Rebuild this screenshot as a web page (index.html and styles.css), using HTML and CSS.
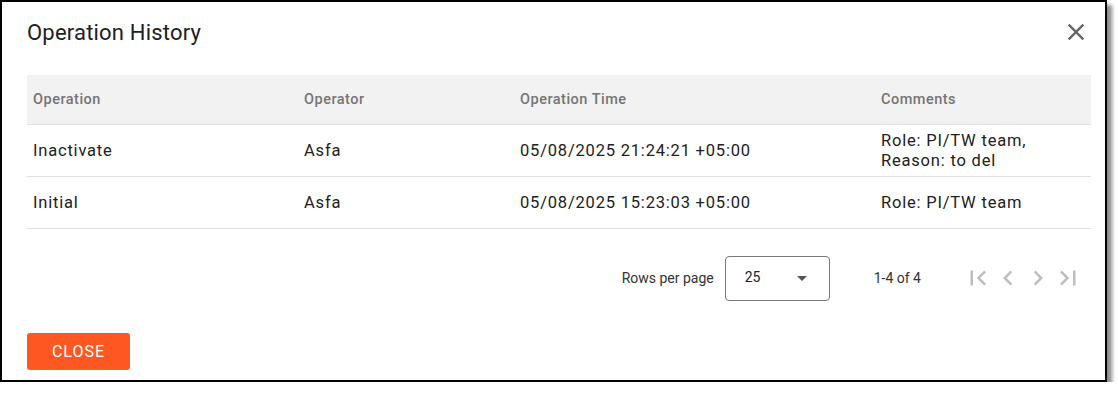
FILE: index.html
```html
<!DOCTYPE html>
<html lang="en">
<head>
<meta charset="utf-8">
<title>Operation History</title>
<link rel="stylesheet" href="styles.css">
</head>
<body>
<div class="dialog">
  <div class="dialog-head">
    <h2 class="dialog-title">Operation History</h2>
    <button class="icon-btn close-x" aria-label="Close">
      <svg viewBox="0 0 24 24" width="28" height="28"><path d="M19 6.41L17.59 5 12 10.59 6.41 5 5 6.41 10.59 12 5 17.59 6.41 19 12 13.41 17.59 19 19 17.59 13.41 12z"/></svg>
    </button>
  </div>
  <table class="grid">
    <colgroup>
      <col class="c1"><col class="c2"><col class="c3"><col class="c4">
    </colgroup>
    <thead>
      <tr><th>Operation</th><th>Operator</th><th>Operation Time</th><th>Comments</th></tr>
    </thead>
    <tbody>
      <tr><td>Inactivate</td><td>Asfa</td><td>05/08/2025 21:24:21 +05:00</td><td>Role: PI/TW team,<br>Reason: to del</td></tr>
      <tr><td>Initial</td><td>Asfa</td><td>05/08/2025 15:23:03 +05:00</td><td>Role: PI/TW team</td></tr>
    </tbody>
  </table>
  <div class="pager">
    <span class="pager-label">Rows per page</span>
    <div class="select">
      <span class="select-val">25</span>
      <span class="caret"></span>
    </div>
    <span class="pager-range">1-4 of 4</span>
    <div class="pager-nav">
      <svg viewBox="0 0 24 24" width="30" height="30"><path d="M18.41 16.59L13.82 12l4.59-4.59L17 6l-6 6 6 6zM6 6h2v12H6z"/></svg>
      <svg viewBox="0 0 24 24" width="30" height="30"><path d="M15.41 7.41L14 6l-6 6 6 6 1.41-1.41L10.83 12z"/></svg>
      <svg viewBox="0 0 24 24" width="30" height="30"><path d="M10 6L8.59 7.41 13.17 12l-4.58 4.59L10 18l6-6z"/></svg>
      <svg viewBox="0 0 24 24" width="30" height="30"><path d="M5.59 7.41L10.18 12l-4.59 4.59L7 18l6-6-6-6zM16 6h2v12h-2z"/></svg>
    </div>
  </div>
  <div class="actions">
    <button class="btn-close">CLOSE</button>
  </div>
</div>
</body>
</html>
```
FILE: styles.css
```css
html, body {
  margin: 0;
  padding: 0;
  background: #fff;
}
body {
  font-family: Roboto, "Liberation Sans", sans-serif;
  color: #212121;
}
.dialog {
  box-sizing: border-box;
  width: 1107px;
  height: 382px;
  border: 2px solid #000;
  box-shadow: 5px 5px 4px rgba(0, 0, 0, 0.45);
  background: #fff;
  padding: 0 14px 0 25px;
  display: flex;
  flex-direction: column;
}
.dialog-head {
  height: 60px;
  display: flex;
  align-items: center;
  justify-content: space-between;
}
.dialog-title {
  margin: 0;
  font-size: 22px;
  font-weight: 400;
  letter-spacing: 0.2px;
  color: #212121;
}
.icon-btn {
  border: 0;
  background: none;
  padding: 0;
  margin-right: 1px;
  display: flex;
}
.close-x svg {
  fill: #666;
}
.grid {
  margin-top: 13px;
  width: 100%;
  border-collapse: collapse;
  table-layout: fixed;
}
.c1 { width: 271px; }
.c2 { width: 216px; }
.c3 { width: 361px; }
.c4 { width: auto; }
.grid th {
  background: #f2f2f2;
  height: 49px;
  padding: 0 6px;
  text-align: left;
  font-size: 14.5px;
  letter-spacing: 0.5px;
  font-weight: 500;
  color: #757575;
  border-bottom: 1px solid #e0e0e0;
}
.grid td {
  height: 51px;
  padding: 0 6px;
  font-size: 16.5px;
  letter-spacing: 0.8px;
  line-height: 20px;
  color: #212121;
  border-bottom: 1px solid #e0e0e0;
}
.pager {
  margin-top: 21px;
  height: 56px;
  display: flex;
  align-items: center;
  justify-content: flex-end;
  padding-right: 8px;
  font-size: 14px;
  color: #333;
}
.pager-label {
  margin-right: 11px;
}
.select {
  box-sizing: border-box;
  width: 105px;
  height: 45px;
  border: 1px solid #7a7a7a;
  border-radius: 4px;
  display: flex;
  align-items: center;
  justify-content: space-between;
  padding: 0 22px 3px 19px;
}
.select-val {
  font-size: 14px;
  color: #222;
}
.caret {
  width: 0;
  height: 0;
  border-left: 5px solid transparent;
  border-right: 5px solid transparent;
  border-top: 5px solid #555;
  margin-top: 3px;
}
.pager-range {
  margin-left: 44px;
  margin-right: 42px;
}
.pager-nav {
  display: flex;
}
.pager-nav svg {
  fill: #bdbdbd;
}
.actions {
  margin-top: 27px;
}
.btn-close {
  width: 103px;
  height: 37px;
  border: 0;
  border-radius: 3px;
  background: #ff5722;
  color: #fff;
  font-family: Roboto, "Liberation Sans", sans-serif;
  font-size: 16px;
  letter-spacing: 1px;
  padding: 0;
}
```
